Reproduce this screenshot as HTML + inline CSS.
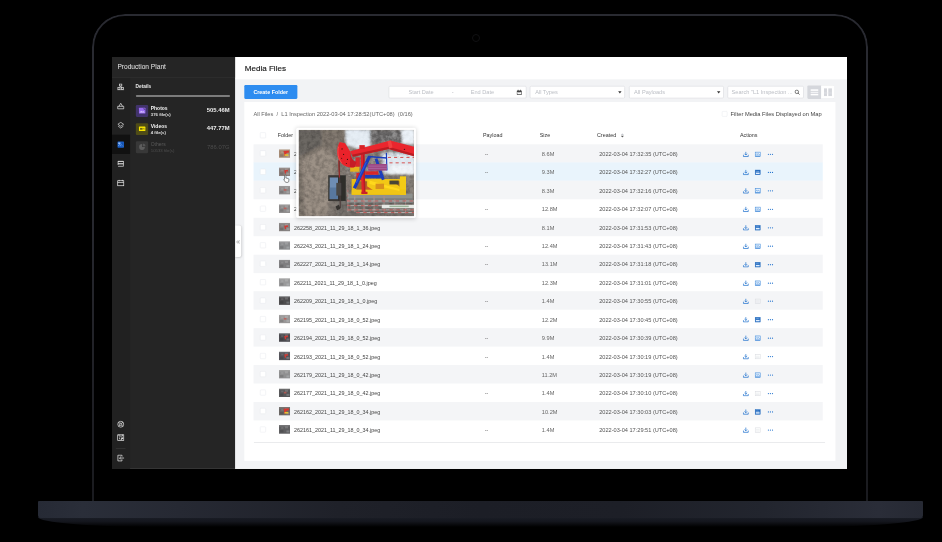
<!DOCTYPE html>
<html><head><meta charset="utf-8">
<style>
*{box-sizing:border-box;margin:0;padding:0}
html,body{width:942px;height:542px;background:#000;overflow:hidden}
body{font-family:"Liberation Sans",sans-serif;position:relative}
/* laptop */
.lid{position:absolute;left:91.6px;top:13.8px;width:776.4px;height:500px;border:2px solid #292a31;border-bottom:none;border-radius:33px 33px 0 0;background:#000;-webkit-mask-image:linear-gradient(180deg,#000 35%,rgba(0,0,0,.62) 100%)}
.cam{position:absolute;left:471.9px;top:34.3px;width:8px;height:8px;border-radius:50%;border:1.6px solid #101012}
.base{position:absolute;left:37.8px;top:500.8px;width:885px;height:17px;border-radius:1px 1px 3px 3px;
 background:linear-gradient(90deg,#262a35 0%,#2a2e39 5%,#262933 16%,#1f2129 34%,#1c1e26 50%,#1d1f27 66%,#22252e 82%,#2a2d38 95%,#262933 100%)}
.base2{position:absolute;left:37.8px;top:517px;width:885px;height:10px;
 background:linear-gradient(180deg,#1b1e27 0%,#14161d 45%,#000 100%);border-radius:0 0 120px 120px / 0 0 10px 10px}
/* app */
.app{position:absolute;left:112px;top:57px;width:1911px;height:1071px;transform:scale(0.3846);transform-origin:0 0;background:#f2f3f5;overflow:hidden;color:#333}
.app *{position:absolute}
.side{left:0;top:0;width:320px;height:1071px;background:#252525}
.nav{left:0;top:53px;width:47px;height:1018px;background:#212121}
.shead{left:0;top:0;width:320px;height:53px;border-bottom:1.5px solid #3b3b3b;background:#252525}
.shead span{left:14px;top:15px;font-size:17.2px;color:#e6e6e6;white-space:nowrap}
.nact{left:0;top:202px;width:47px;height:50px;background:#111}
.nic{left:13px;width:19.5px;height:19.5px}
.main{left:320px;top:0;width:1591px;height:1071px;background:#f2f3f5}
.mhead{left:0;top:0;width:1591px;height:57.5px;background:#fff}
.mhead span{left:25px;top:17px;font-size:21px;color:#151515;white-space:nowrap;-webkit-text-stroke:.35px #151515}
.panel{left:24px;top:117px;width:1537px;height:932.5px;background:#fff}
.row{left:0;width:1911px;height:48px}
.row::before{content:"";position:absolute;left:367.7px;top:0;width:1480px;height:48px}
.row.odd::before{background:#f4f5f7}
.row.hov::before{background:#e9f4fc}
.cb{width:15px;height:15px;border:1.4px solid #e3e5e9;border-radius:2px;background:#fff}
.row .cb{left:384.5px!important;top:16.5px}
.th{left:433.7px;top:13px;width:29.3px;height:22.5px}
.c{top:17.5px;font-size:14px;line-height:16px;color:#555;white-space:nowrap}
.fn{left:473.2px;color:#444}
.pl{left:969px;color:#555}
.sz{left:1117.5px;color:#666;font-size:14.7px}
.dt{left:1266.8px;color:#555;font-size:14.6px}
.ic{top:18px;width:16px;height:16px}
.photo{left:485px;top:188.5px;width:300.5px;height:225.5px}
.hd{top:195px;font-size:14px;line-height:16px;color:#333;white-space:nowrap}
.inp{top:74.5px;height:33.5px;background:#fff;border:2.2px solid #dfe1e5;border-radius:4px}
.ph{top:6.5px;font-size:14.6px;line-height:16px;color:#bbbec4;white-space:nowrap}
</style></head><body>
<div class="lid"></div>
<div class="cam"></div>
<div class="base2"></div>
<div class="base"></div>
<div class="app">
 <div class="main">
  <div class="mhead"><span>Media Files</span></div>
 </div>
 <!-- toolbar -->
 <div style="left:344px;top:72.8px;width:137.5px;height:36.4px;background:#2d8cf0;border-radius:3px"></div>
 <span style="left:344px;top:82.5px;width:137.5px;text-align:center;font-size:14px;line-height:16px;color:#fff;font-weight:bold;white-space:nowrap">Create Folder</span>
 <div class="inp" style="left:718.7px;width:359px">
   <span class="ph" style="left:50px">Start Date</span><span class="ph" style="left:163px">-</span><span class="ph" style="left:212px">End Date</span>
   <svg style="left:330px;top:7px;width:16px;height:16px" viewBox="0 0 16 16"><rect x="1.5" y="3" width="13" height="11.5" rx="1.5" fill="#444"/><rect x="3" y="7" width="10" height="6" fill="#fff"/><rect x="4" y="1" width="2" height="4" fill="#444"/><rect x="10" y="1" width="2" height="4" fill="#444"/><rect x="4.5" y="8.5" width="7" height="1.2" fill="#666"/></svg>
 </div>
 <div class="inp" style="left:1086.3px;width:248px"><span class="ph" style="left:12px">All Types</span>
   <svg style="left:227px;top:11.5px;width:11px;height:8px" viewBox="0 0 12 9"><path d="M1 1.5h10L6 8z" fill="#333"/></svg></div>
 <div class="inp" style="left:1343.5px;width:247px"><span class="ph" style="left:12px">All Payloads</span>
   <svg style="left:226px;top:11.5px;width:11px;height:8px" viewBox="0 0 12 9"><path d="M1 1.5h10L6 8z" fill="#333"/></svg></div>
 <div class="inp" style="left:1600px;width:199px"><span class="ph" style="left:9px">Search "L1 Inspection ...</span>
   <svg style="left:172px;top:7px;width:15px;height:15px" viewBox="0 0 16 16"><circle cx="7" cy="7" r="4.8" fill="none" stroke="#333" stroke-width="1.8"/><path d="M10.5 10.5l4 4" stroke="#333" stroke-width="2"/></svg></div>
 <div style="left:1808.4px;top:73.5px;width:36px;height:35.5px;background:#d5d7dc;border-radius:3px 0 0 3px"></div>
 <svg style="left:1815.5px;top:82.5px;width:21px;height:18px" viewBox="0 0 21 18"><rect x="0" y="1" width="21" height="4" fill="#fff"/><rect x="0" y="7.5" width="21" height="3.5" fill="#f2f3f5"/><rect x="0" y="13" width="21" height="4" fill="#fff"/></svg>
 <div style="left:1844.4px;top:73.5px;width:34px;height:35.5px;background:#fff;border:1.3px solid #dcdee2;border-left:none;border-radius:0 3px 3px 0"></div>
 <svg style="left:1851px;top:81px;width:21px;height:21px" viewBox="0 0 21 21"><rect x="0" y="0" width="8" height="21" fill="#d5d7dc"/><rect x="11.5" y="0" width="9.5" height="21" fill="#d5d7dc"/><rect x="0" y="12" width="21" height="1.2" fill="#e8e9ec"/></svg>
 <!-- panel -->
 <div class="panel" style="left:344px"></div>
 <span style="left:367.7px;top:140px;font-size:14.8px;line-height:16px;color:#666;white-space:nowrap">All Files&nbsp; /&nbsp; L1 Inspection 2022-03-04 17:28:52(UTC+08) &nbsp;(0/16)</span>
 <i class="cb" style="left:1586px;top:140.5px;width:14px;height:14px"></i>
 <span style="left:1608.4px;top:140px;font-size:14.9px;line-height:16px;color:#444;white-space:nowrap">Filter Media Files Displayed on Map</span>
 <!-- table header -->
 <i class="cb" style="left:384.5px;top:195.5px"></i>
 <span class="hd" style="left:431px">Folder</span>
 <span class="hd" style="left:964.6px">Payload</span>
 <span class="hd" style="left:1112px">Size</span>
 <span class="hd" style="left:1261px">Created</span>
 <svg style="left:1322px;top:198px;width:10px;height:12px" viewBox="0 0 10 12"><path d="M5 0.5L9 5H1z" fill="#c5c8ce"/><path d="M5 11.5L9 7H1z" fill="#555"/></svg>
 <span class="hd" style="left:1632.6px">Actions</span>
<div class="row odd" style="top:226.6px"><i class="cb" style="left:17px"></i><svg class="th" viewBox="0 0 30 21" preserveAspectRatio="none"><rect width="30" height="21" fill="#a58a74"/><rect x="0" y="0" width="30" height="4" fill="#fff" opacity=".10"/><rect x="3" y="12" width="9" height="6" fill="#000" opacity=".13"/><rect x="16" y="3" width="8" height="5" fill="#fff" opacity=".16"/><rect x="20" y="13" width="8" height="5" fill="#dfe6ee" opacity=".22"/><rect x="6" y="5" width="6" height="4" fill="#fff" opacity=".12"/><path d="M12 4 L26 3 L27 8 L20 9 L19 16 L14 16 L14 9 Z" fill="#d8362f"/><rect x="15" y="12" width="10" height="4" fill="#e2c236"/></svg><span class="c fn">262290_2021_11_29_18_2_0.jpeg</span><span class="c pl">--</span><span class="c sz">8.6M</span><span class="c dt">2022-03-04 17:32:35 (UTC+08)</span><svg class="ic" style="left:1640px" viewBox="0 0 16 16"><path d="M8 1.5v8.2M4.6 6.6L8 10l3.4-3.4" fill="none" stroke="#2474cf" stroke-width="1.9"/><path d="M1.6 9.2v4.6h12.8V9.2" fill="none" stroke="#2474cf" stroke-width="2"/></svg><svg class="ic" style="left:1671px" viewBox="0 0 16 16"><rect x="1.3" y="2.3" width="13.4" height="11.4" fill="#e4f0fd" stroke="#3a86d8" stroke-width="1.5"/><path d="M2.5 9.5l3.2-3.2 2.6 2.4 2.2-1.8 3 2.6" fill="none" stroke="#3a86d8" stroke-width="1.5"/><path d="M2 12.6h12" stroke="#2474cf" stroke-width="1.6"/></svg><svg class="ic" style="left:1704px" viewBox="0 0 16 16"><circle cx="2.6" cy="8" r="1.6" fill="#2474cf"/><circle cx="8" cy="8" r="1.6" fill="#2474cf"/><circle cx="13.4" cy="8" r="1.6" fill="#2474cf"/></svg></div>
<div class="row hov" style="top:274.4px"><i class="cb" style="left:17px"></i><svg class="th" viewBox="0 0 30 21" preserveAspectRatio="none"><rect width="30" height="21" fill="#8a7f7c"/><rect x="0" y="0" width="30" height="4" fill="#fff" opacity=".10"/><rect x="3" y="12" width="9" height="6" fill="#000" opacity=".13"/><rect x="16" y="3" width="8" height="5" fill="#fff" opacity=".16"/><rect x="20" y="13" width="8" height="5" fill="#dfe6ee" opacity=".22"/><rect x="6" y="5" width="6" height="4" fill="#fff" opacity=".12"/><path d="M14 7 L24 6 L24 10 L19 10 L19 15 L16 15 Z" fill="#d03a34"/></svg><span class="c fn">262275_2021_11_29_18_1_52.jpeg</span><span class="c pl">--</span><span class="c sz">9.3M</span><span class="c dt">2022-03-04 17:32:27 (UTC+08)</span><svg class="ic" style="left:1640px" viewBox="0 0 16 16"><path d="M8 1.5v8.2M4.6 6.6L8 10l3.4-3.4" fill="none" stroke="#2474cf" stroke-width="1.9"/><path d="M1.6 9.2v4.6h12.8V9.2" fill="none" stroke="#2474cf" stroke-width="2"/></svg><svg class="ic" style="left:1671px" viewBox="0 0 16 16"><rect x="1.2" y="1.8" width="13.6" height="12.4" fill="#2a6fc0" stroke="#2a6fc0" stroke-width="1.2"/><rect x="3.2" y="8.6" width="9.6" height="3.6" fill="#dfeeff"/><path d="M3.2 6.5l3-2.4 2.4 1.8 2-1.2 2.2 1.8z" fill="#9cc4f0"/></svg><svg class="ic" style="left:1704px" viewBox="0 0 16 16"><circle cx="2.6" cy="8" r="1.6" fill="#2474cf"/><circle cx="8" cy="8" r="1.6" fill="#2474cf"/><circle cx="13.4" cy="8" r="1.6" fill="#2474cf"/></svg></div>
<div class="row odd" style="top:322.3px"><i class="cb" style="left:17px"></i><svg class="th" viewBox="0 0 30 21" preserveAspectRatio="none"><rect width="30" height="21" fill="#8f8c8c"/><rect x="0" y="0" width="30" height="4" fill="#fff" opacity=".10"/><rect x="3" y="12" width="9" height="6" fill="#000" opacity=".13"/><rect x="16" y="3" width="8" height="5" fill="#fff" opacity=".16"/><rect x="20" y="13" width="8" height="5" fill="#dfe6ee" opacity=".22"/><rect x="6" y="5" width="6" height="4" fill="#fff" opacity=".12"/><rect x="13" y="8" width="7" height="4" fill="#c25a52" opacity=".8"/></svg><span class="c fn">262274_2021_11_29_18_1_52.jpeg</span><span class="c sz">8.3M</span><span class="c dt">2022-03-04 17:32:16 (UTC+08)</span><svg class="ic" style="left:1640px" viewBox="0 0 16 16"><path d="M8 1.5v8.2M4.6 6.6L8 10l3.4-3.4" fill="none" stroke="#2474cf" stroke-width="1.9"/><path d="M1.6 9.2v4.6h12.8V9.2" fill="none" stroke="#2474cf" stroke-width="2"/></svg><svg class="ic" style="left:1671px" viewBox="0 0 16 16"><rect x="1.3" y="2.3" width="13.4" height="11.4" fill="#e4f0fd" stroke="#3a86d8" stroke-width="1.5"/><path d="M2.5 9.5l3.2-3.2 2.6 2.4 2.2-1.8 3 2.6" fill="none" stroke="#3a86d8" stroke-width="1.5"/><path d="M2 12.6h12" stroke="#2474cf" stroke-width="1.6"/></svg><svg class="ic" style="left:1704px" viewBox="0 0 16 16"><circle cx="2.6" cy="8" r="1.6" fill="#2474cf"/><circle cx="8" cy="8" r="1.6" fill="#2474cf"/><circle cx="13.4" cy="8" r="1.6" fill="#2474cf"/></svg></div>
<div class="row" style="top:370.1px"><i class="cb" style="left:17px"></i><svg class="th" viewBox="0 0 30 21" preserveAspectRatio="none"><rect width="30" height="21" fill="#8e8c8c"/><rect x="0" y="0" width="30" height="4" fill="#fff" opacity=".10"/><rect x="3" y="12" width="9" height="6" fill="#000" opacity=".13"/><rect x="16" y="3" width="8" height="5" fill="#fff" opacity=".16"/><rect x="20" y="13" width="8" height="5" fill="#dfe6ee" opacity=".22"/><rect x="6" y="5" width="6" height="4" fill="#fff" opacity=".12"/><rect x="13" y="8" width="7" height="4" fill="#c25a52" opacity=".8"/></svg><span class="c fn">262259_2021_11_29_18_1_36.jpeg</span><span class="c pl">--</span><span class="c sz">12.8M</span><span class="c dt">2022-03-04 17:32:07 (UTC+08)</span><svg class="ic" style="left:1640px" viewBox="0 0 16 16"><path d="M8 1.5v8.2M4.6 6.6L8 10l3.4-3.4" fill="none" stroke="#2474cf" stroke-width="1.9"/><path d="M1.6 9.2v4.6h12.8V9.2" fill="none" stroke="#2474cf" stroke-width="2"/></svg><svg class="ic" style="left:1671px" viewBox="0 0 16 16"><rect x="1.3" y="2.3" width="13.4" height="11.4" fill="#e4f0fd" stroke="#3a86d8" stroke-width="1.5"/><path d="M2.5 9.5l3.2-3.2 2.6 2.4 2.2-1.8 3 2.6" fill="none" stroke="#3a86d8" stroke-width="1.5"/><path d="M2 12.6h12" stroke="#2474cf" stroke-width="1.6"/></svg><svg class="ic" style="left:1704px" viewBox="0 0 16 16"><circle cx="2.6" cy="8" r="1.6" fill="#2474cf"/><circle cx="8" cy="8" r="1.6" fill="#2474cf"/><circle cx="13.4" cy="8" r="1.6" fill="#2474cf"/></svg></div>
<div class="row odd" style="top:418.0px"><i class="cb" style="left:17px"></i><svg class="th" viewBox="0 0 30 21" preserveAspectRatio="none"><rect width="30" height="21" fill="#85807f"/><rect x="0" y="0" width="30" height="4" fill="#fff" opacity=".10"/><rect x="3" y="12" width="9" height="6" fill="#000" opacity=".13"/><rect x="16" y="3" width="8" height="5" fill="#fff" opacity=".16"/><rect x="20" y="13" width="8" height="5" fill="#dfe6ee" opacity=".22"/><rect x="6" y="5" width="6" height="4" fill="#fff" opacity=".12"/><path d="M14 7 L24 6 L24 10 L19 10 L19 15 L16 15 Z" fill="#d03a34"/></svg><span class="c fn">262258_2021_11_29_18_1_36.jpeg</span><span class="c sz">8.1M</span><span class="c dt">2022-03-04 17:31:53 (UTC+08)</span><svg class="ic" style="left:1640px" viewBox="0 0 16 16"><path d="M8 1.5v8.2M4.6 6.6L8 10l3.4-3.4" fill="none" stroke="#2474cf" stroke-width="1.9"/><path d="M1.6 9.2v4.6h12.8V9.2" fill="none" stroke="#2474cf" stroke-width="2"/></svg><svg class="ic" style="left:1671px" viewBox="0 0 16 16"><rect x="1.2" y="1.8" width="13.6" height="12.4" fill="#2a6fc0" stroke="#2a6fc0" stroke-width="1.2"/><rect x="3.2" y="8.6" width="9.6" height="3.6" fill="#dfeeff"/><path d="M3.2 6.5l3-2.4 2.4 1.8 2-1.2 2.2 1.8z" fill="#9cc4f0"/></svg><svg class="ic" style="left:1704px" viewBox="0 0 16 16"><circle cx="2.6" cy="8" r="1.6" fill="#2474cf"/><circle cx="8" cy="8" r="1.6" fill="#2474cf"/><circle cx="13.4" cy="8" r="1.6" fill="#2474cf"/></svg></div>
<div class="row" style="top:465.9px"><i class="cb" style="left:17px"></i><svg class="th" viewBox="0 0 30 21" preserveAspectRatio="none"><rect width="30" height="21" fill="#8b8c8e"/><rect x="0" y="0" width="30" height="4" fill="#fff" opacity=".10"/><rect x="3" y="12" width="9" height="6" fill="#000" opacity=".13"/><rect x="16" y="3" width="8" height="5" fill="#fff" opacity=".16"/><rect x="20" y="13" width="8" height="5" fill="#dfe6ee" opacity=".22"/><rect x="6" y="5" width="6" height="4" fill="#fff" opacity=".12"/></svg><span class="c fn">262243_2021_11_29_18_1_24.jpeg</span><span class="c pl">--</span><span class="c sz">12.4M</span><span class="c dt">2022-03-04 17:31:43 (UTC+08)</span><svg class="ic" style="left:1640px" viewBox="0 0 16 16"><path d="M8 1.5v8.2M4.6 6.6L8 10l3.4-3.4" fill="none" stroke="#2474cf" stroke-width="1.9"/><path d="M1.6 9.2v4.6h12.8V9.2" fill="none" stroke="#2474cf" stroke-width="2"/></svg><svg class="ic" style="left:1671px" viewBox="0 0 16 16"><rect x="1.3" y="2.3" width="13.4" height="11.4" fill="#e4f0fd" stroke="#3a86d8" stroke-width="1.5"/><path d="M2.5 9.5l3.2-3.2 2.6 2.4 2.2-1.8 3 2.6" fill="none" stroke="#3a86d8" stroke-width="1.5"/><path d="M2 12.6h12" stroke="#2474cf" stroke-width="1.6"/></svg><svg class="ic" style="left:1704px" viewBox="0 0 16 16"><circle cx="2.6" cy="8" r="1.6" fill="#2474cf"/><circle cx="8" cy="8" r="1.6" fill="#2474cf"/><circle cx="13.4" cy="8" r="1.6" fill="#2474cf"/></svg></div>
<div class="row odd" style="top:513.7px"><i class="cb" style="left:17px"></i><svg class="th" viewBox="0 0 30 21" preserveAspectRatio="none"><rect width="30" height="21" fill="#7f7e80"/><rect x="0" y="0" width="30" height="4" fill="#fff" opacity=".10"/><rect x="3" y="12" width="9" height="6" fill="#000" opacity=".13"/><rect x="16" y="3" width="8" height="5" fill="#fff" opacity=".16"/><rect x="20" y="13" width="8" height="5" fill="#dfe6ee" opacity=".22"/><rect x="6" y="5" width="6" height="4" fill="#fff" opacity=".12"/></svg><span class="c fn">262227_2021_11_29_18_1_14.jpeg</span><span class="c pl">--</span><span class="c sz">13.1M</span><span class="c dt">2022-03-04 17:31:18 (UTC+08)</span><svg class="ic" style="left:1640px" viewBox="0 0 16 16"><path d="M8 1.5v8.2M4.6 6.6L8 10l3.4-3.4" fill="none" stroke="#2474cf" stroke-width="1.9"/><path d="M1.6 9.2v4.6h12.8V9.2" fill="none" stroke="#2474cf" stroke-width="2"/></svg><svg class="ic" style="left:1671px" viewBox="0 0 16 16"><rect x="1.2" y="1.8" width="13.6" height="12.4" fill="#2a6fc0" stroke="#2a6fc0" stroke-width="1.2"/><rect x="3.2" y="8.6" width="9.6" height="3.6" fill="#dfeeff"/><path d="M3.2 6.5l3-2.4 2.4 1.8 2-1.2 2.2 1.8z" fill="#9cc4f0"/></svg><svg class="ic" style="left:1704px" viewBox="0 0 16 16"><circle cx="2.6" cy="8" r="1.6" fill="#2474cf"/><circle cx="8" cy="8" r="1.6" fill="#2474cf"/><circle cx="13.4" cy="8" r="1.6" fill="#2474cf"/></svg></div>
<div class="row" style="top:561.5px"><i class="cb" style="left:17px"></i><svg class="th" viewBox="0 0 30 21" preserveAspectRatio="none"><rect width="30" height="21" fill="#9a9a9b"/><rect x="0" y="0" width="30" height="4" fill="#fff" opacity=".10"/><rect x="3" y="12" width="9" height="6" fill="#000" opacity=".13"/><rect x="16" y="3" width="8" height="5" fill="#fff" opacity=".16"/><rect x="20" y="13" width="8" height="5" fill="#dfe6ee" opacity=".22"/><rect x="6" y="5" width="6" height="4" fill="#fff" opacity=".12"/></svg><span class="c fn">262211_2021_11_29_18_1_0.jpeg</span><span class="c sz">12.3M</span><span class="c dt">2022-03-04 17:31:01 (UTC+08)</span><svg class="ic" style="left:1640px" viewBox="0 0 16 16"><path d="M8 1.5v8.2M4.6 6.6L8 10l3.4-3.4" fill="none" stroke="#2474cf" stroke-width="1.9"/><path d="M1.6 9.2v4.6h12.8V9.2" fill="none" stroke="#2474cf" stroke-width="2"/></svg><svg class="ic" style="left:1671px" viewBox="0 0 16 16"><rect x="1.3" y="2.3" width="13.4" height="11.4" fill="#e4f0fd" stroke="#3a86d8" stroke-width="1.5"/><path d="M2.5 9.5l3.2-3.2 2.6 2.4 2.2-1.8 3 2.6" fill="none" stroke="#3a86d8" stroke-width="1.5"/><path d="M2 12.6h12" stroke="#2474cf" stroke-width="1.6"/></svg><svg class="ic" style="left:1704px" viewBox="0 0 16 16"><circle cx="2.6" cy="8" r="1.6" fill="#2474cf"/><circle cx="8" cy="8" r="1.6" fill="#2474cf"/><circle cx="13.4" cy="8" r="1.6" fill="#2474cf"/></svg></div>
<div class="row odd" style="top:609.4px"><i class="cb" style="left:17px"></i><svg class="th" viewBox="0 0 30 21" preserveAspectRatio="none"><rect width="30" height="21" fill="#4e4d4f"/><rect x="0" y="0" width="30" height="4" fill="#fff" opacity=".10"/><rect x="3" y="12" width="9" height="6" fill="#000" opacity=".13"/><rect x="16" y="3" width="8" height="5" fill="#fff" opacity=".16"/><rect x="20" y="13" width="8" height="5" fill="#dfe6ee" opacity=".22"/><rect x="6" y="5" width="6" height="4" fill="#fff" opacity=".12"/></svg><span class="c fn">262209_2021_11_29_18_1_0.jpeg</span><span class="c pl">--</span><span class="c sz">1.4M</span><span class="c dt">2022-03-04 17:30:55 (UTC+08)</span><svg class="ic" style="left:1640px" viewBox="0 0 16 16"><path d="M8 1.5v8.2M4.6 6.6L8 10l3.4-3.4" fill="none" stroke="#2474cf" stroke-width="1.9"/><path d="M1.6 9.2v4.6h12.8V9.2" fill="none" stroke="#2474cf" stroke-width="2"/></svg><svg class="ic" style="left:1671px" viewBox="0 0 16 16"><rect x="1.3" y="2.3" width="13.4" height="11.4" fill="none" stroke="#d9dbe0" stroke-width="1.5"/><path d="M3 7h10M3 10.5h10" stroke="#e0e2e6" stroke-width="1.4"/></svg><svg class="ic" style="left:1704px" viewBox="0 0 16 16"><circle cx="2.6" cy="8" r="1.6" fill="#2474cf"/><circle cx="8" cy="8" r="1.6" fill="#2474cf"/><circle cx="13.4" cy="8" r="1.6" fill="#2474cf"/></svg></div>
<div class="row" style="top:657.2px"><i class="cb" style="left:17px"></i><svg class="th" viewBox="0 0 30 21" preserveAspectRatio="none"><rect width="30" height="21" fill="#999797"/><rect x="0" y="0" width="30" height="4" fill="#fff" opacity=".10"/><rect x="3" y="12" width="9" height="6" fill="#000" opacity=".13"/><rect x="16" y="3" width="8" height="5" fill="#fff" opacity=".16"/><rect x="20" y="13" width="8" height="5" fill="#dfe6ee" opacity=".22"/><rect x="6" y="5" width="6" height="4" fill="#fff" opacity=".12"/><rect x="13" y="8" width="7" height="4" fill="#c25a52" opacity=".8"/></svg><span class="c fn">262195_2021_11_29_18_0_52.jpeg</span><span class="c sz">12.2M</span><span class="c dt">2022-03-04 17:30:45 (UTC+08)</span><svg class="ic" style="left:1640px" viewBox="0 0 16 16"><path d="M8 1.5v8.2M4.6 6.6L8 10l3.4-3.4" fill="none" stroke="#2474cf" stroke-width="1.9"/><path d="M1.6 9.2v4.6h12.8V9.2" fill="none" stroke="#2474cf" stroke-width="2"/></svg><svg class="ic" style="left:1671px" viewBox="0 0 16 16"><rect x="1.2" y="1.8" width="13.6" height="12.4" fill="#2a6fc0" stroke="#2a6fc0" stroke-width="1.2"/><rect x="3.2" y="8.6" width="9.6" height="3.6" fill="#dfeeff"/><path d="M3.2 6.5l3-2.4 2.4 1.8 2-1.2 2.2 1.8z" fill="#9cc4f0"/></svg><svg class="ic" style="left:1704px" viewBox="0 0 16 16"><circle cx="2.6" cy="8" r="1.6" fill="#2474cf"/><circle cx="8" cy="8" r="1.6" fill="#2474cf"/><circle cx="13.4" cy="8" r="1.6" fill="#2474cf"/></svg></div>
<div class="row odd" style="top:705.1px"><i class="cb" style="left:17px"></i><svg class="th" viewBox="0 0 30 21" preserveAspectRatio="none"><rect width="30" height="21" fill="#4c4b50"/><rect x="0" y="0" width="30" height="4" fill="#fff" opacity=".10"/><rect x="3" y="12" width="9" height="6" fill="#000" opacity=".13"/><rect x="16" y="3" width="8" height="5" fill="#fff" opacity=".16"/><rect x="20" y="13" width="8" height="5" fill="#dfe6ee" opacity=".22"/><rect x="6" y="5" width="6" height="4" fill="#fff" opacity=".12"/><path d="M14 7 L24 6 L24 10 L19 10 L19 15 L16 15 Z" fill="#d03a34"/></svg><span class="c fn">262194_2021_11_29_18_0_52.jpeg</span><span class="c pl">--</span><span class="c sz">9.9M</span><span class="c dt">2022-03-04 17:30:39 (UTC+08)</span><svg class="ic" style="left:1640px" viewBox="0 0 16 16"><path d="M8 1.5v8.2M4.6 6.6L8 10l3.4-3.4" fill="none" stroke="#2474cf" stroke-width="1.9"/><path d="M1.6 9.2v4.6h12.8V9.2" fill="none" stroke="#2474cf" stroke-width="2"/></svg><svg class="ic" style="left:1671px" viewBox="0 0 16 16"><rect x="1.3" y="2.3" width="13.4" height="11.4" fill="#e4f0fd" stroke="#3a86d8" stroke-width="1.5"/><path d="M2.5 9.5l3.2-3.2 2.6 2.4 2.2-1.8 3 2.6" fill="none" stroke="#3a86d8" stroke-width="1.5"/><path d="M2 12.6h12" stroke="#2474cf" stroke-width="1.6"/></svg><svg class="ic" style="left:1704px" viewBox="0 0 16 16"><circle cx="2.6" cy="8" r="1.6" fill="#2474cf"/><circle cx="8" cy="8" r="1.6" fill="#2474cf"/><circle cx="13.4" cy="8" r="1.6" fill="#2474cf"/></svg></div>
<div class="row" style="top:753.0px"><i class="cb" style="left:17px"></i><svg class="th" viewBox="0 0 30 21" preserveAspectRatio="none"><rect width="30" height="21" fill="#55545a"/><rect x="0" y="0" width="30" height="4" fill="#fff" opacity=".10"/><rect x="3" y="12" width="9" height="6" fill="#000" opacity=".13"/><rect x="16" y="3" width="8" height="5" fill="#fff" opacity=".16"/><rect x="20" y="13" width="8" height="5" fill="#dfe6ee" opacity=".22"/><rect x="6" y="5" width="6" height="4" fill="#fff" opacity=".12"/><path d="M14 7 L24 6 L24 10 L19 10 L19 15 L16 15 Z" fill="#d03a34"/></svg><span class="c fn">262193_2021_11_29_18_0_52.jpeg</span><span class="c pl">--</span><span class="c sz">1.4M</span><span class="c dt">2022-03-04 17:30:19 (UTC+08)</span><svg class="ic" style="left:1640px" viewBox="0 0 16 16"><path d="M8 1.5v8.2M4.6 6.6L8 10l3.4-3.4" fill="none" stroke="#2474cf" stroke-width="1.9"/><path d="M1.6 9.2v4.6h12.8V9.2" fill="none" stroke="#2474cf" stroke-width="2"/></svg><svg class="ic" style="left:1671px" viewBox="0 0 16 16"><rect x="1.3" y="2.3" width="13.4" height="11.4" fill="none" stroke="#d9dbe0" stroke-width="1.5"/><path d="M3 7h10M3 10.5h10" stroke="#e0e2e6" stroke-width="1.4"/></svg><svg class="ic" style="left:1704px" viewBox="0 0 16 16"><circle cx="2.6" cy="8" r="1.6" fill="#2474cf"/><circle cx="8" cy="8" r="1.6" fill="#2474cf"/><circle cx="13.4" cy="8" r="1.6" fill="#2474cf"/></svg></div>
<div class="row odd" style="top:800.8px"><i class="cb" style="left:17px"></i><svg class="th" viewBox="0 0 30 21" preserveAspectRatio="none"><rect width="30" height="21" fill="#8f8f90"/><rect x="0" y="0" width="30" height="4" fill="#fff" opacity=".10"/><rect x="3" y="12" width="9" height="6" fill="#000" opacity=".13"/><rect x="16" y="3" width="8" height="5" fill="#fff" opacity=".16"/><rect x="20" y="13" width="8" height="5" fill="#dfe6ee" opacity=".22"/><rect x="6" y="5" width="6" height="4" fill="#fff" opacity=".12"/></svg><span class="c fn">262179_2021_11_29_18_0_42.jpeg</span><span class="c sz">11.2M</span><span class="c dt">2022-03-04 17:30:19 (UTC+08)</span><svg class="ic" style="left:1640px" viewBox="0 0 16 16"><path d="M8 1.5v8.2M4.6 6.6L8 10l3.4-3.4" fill="none" stroke="#2474cf" stroke-width="1.9"/><path d="M1.6 9.2v4.6h12.8V9.2" fill="none" stroke="#2474cf" stroke-width="2"/></svg><svg class="ic" style="left:1671px" viewBox="0 0 16 16"><rect x="1.3" y="2.3" width="13.4" height="11.4" fill="#e4f0fd" stroke="#3a86d8" stroke-width="1.5"/><path d="M2.5 9.5l3.2-3.2 2.6 2.4 2.2-1.8 3 2.6" fill="none" stroke="#3a86d8" stroke-width="1.5"/><path d="M2 12.6h12" stroke="#2474cf" stroke-width="1.6"/></svg><svg class="ic" style="left:1704px" viewBox="0 0 16 16"><circle cx="2.6" cy="8" r="1.6" fill="#2474cf"/><circle cx="8" cy="8" r="1.6" fill="#2474cf"/><circle cx="13.4" cy="8" r="1.6" fill="#2474cf"/></svg></div>
<div class="row" style="top:848.7px"><i class="cb" style="left:17px"></i><svg class="th" viewBox="0 0 30 21" preserveAspectRatio="none"><rect width="30" height="21" fill="#58585a"/><rect x="0" y="0" width="30" height="4" fill="#fff" opacity=".10"/><rect x="3" y="12" width="9" height="6" fill="#000" opacity=".13"/><rect x="16" y="3" width="8" height="5" fill="#fff" opacity=".16"/><rect x="20" y="13" width="8" height="5" fill="#dfe6ee" opacity=".22"/><rect x="6" y="5" width="6" height="4" fill="#fff" opacity=".12"/><rect x="13" y="8" width="7" height="4" fill="#c25a52" opacity=".8"/></svg><span class="c fn">262177_2021_11_29_18_0_42.jpeg</span><span class="c pl">--</span><span class="c sz">1.4M</span><span class="c dt">2022-03-04 17:30:10 (UTC+08)</span><svg class="ic" style="left:1640px" viewBox="0 0 16 16"><path d="M8 1.5v8.2M4.6 6.6L8 10l3.4-3.4" fill="none" stroke="#2474cf" stroke-width="1.9"/><path d="M1.6 9.2v4.6h12.8V9.2" fill="none" stroke="#2474cf" stroke-width="2"/></svg><svg class="ic" style="left:1671px" viewBox="0 0 16 16"><rect x="1.3" y="2.3" width="13.4" height="11.4" fill="none" stroke="#d9dbe0" stroke-width="1.5"/><path d="M3 7h10M3 10.5h10" stroke="#e0e2e6" stroke-width="1.4"/></svg><svg class="ic" style="left:1704px" viewBox="0 0 16 16"><circle cx="2.6" cy="8" r="1.6" fill="#2474cf"/><circle cx="8" cy="8" r="1.6" fill="#2474cf"/><circle cx="13.4" cy="8" r="1.6" fill="#2474cf"/></svg></div>
<div class="row odd" style="top:896.5px"><i class="cb" style="left:17px"></i><svg class="th" viewBox="0 0 30 21" preserveAspectRatio="none"><rect width="30" height="21" fill="#6a6664"/><rect x="0" y="0" width="30" height="4" fill="#fff" opacity=".10"/><rect x="3" y="12" width="9" height="6" fill="#000" opacity=".13"/><rect x="16" y="3" width="8" height="5" fill="#fff" opacity=".16"/><rect x="20" y="13" width="8" height="5" fill="#dfe6ee" opacity=".22"/><rect x="6" y="5" width="6" height="4" fill="#fff" opacity=".12"/><path d="M12 4 L26 3 L27 8 L20 9 L19 16 L14 16 L14 9 Z" fill="#d8362f"/><rect x="15" y="12" width="10" height="4" fill="#e2c236"/></svg><span class="c fn">262162_2021_11_29_18_0_34.jpeg</span><span class="c sz">10.2M</span><span class="c dt">2022-03-04 17:30:03 (UTC+08)</span><svg class="ic" style="left:1640px" viewBox="0 0 16 16"><path d="M8 1.5v8.2M4.6 6.6L8 10l3.4-3.4" fill="none" stroke="#2474cf" stroke-width="1.9"/><path d="M1.6 9.2v4.6h12.8V9.2" fill="none" stroke="#2474cf" stroke-width="2"/></svg><svg class="ic" style="left:1671px" viewBox="0 0 16 16"><rect x="1.2" y="1.8" width="13.6" height="12.4" fill="#2a6fc0" stroke="#2a6fc0" stroke-width="1.2"/><rect x="3.2" y="8.6" width="9.6" height="3.6" fill="#dfeeff"/><path d="M3.2 6.5l3-2.4 2.4 1.8 2-1.2 2.2 1.8z" fill="#9cc4f0"/></svg><svg class="ic" style="left:1704px" viewBox="0 0 16 16"><circle cx="2.6" cy="8" r="1.6" fill="#2474cf"/><circle cx="8" cy="8" r="1.6" fill="#2474cf"/><circle cx="13.4" cy="8" r="1.6" fill="#2474cf"/></svg></div>
<div class="row" style="top:944.4px"><i class="cb" style="left:17px"></i><svg class="th" viewBox="0 0 30 21" preserveAspectRatio="none"><rect width="30" height="21" fill="#5e5e60"/><rect x="0" y="0" width="30" height="4" fill="#fff" opacity=".10"/><rect x="3" y="12" width="9" height="6" fill="#000" opacity=".13"/><rect x="16" y="3" width="8" height="5" fill="#fff" opacity=".16"/><rect x="20" y="13" width="8" height="5" fill="#dfe6ee" opacity=".22"/><rect x="6" y="5" width="6" height="4" fill="#fff" opacity=".12"/></svg><span class="c fn">262161_2021_11_29_18_0_34.jpeg</span><span class="c pl">--</span><span class="c sz">1.4M</span><span class="c dt">2022-03-04 17:29:51 (UTC+08)</span><svg class="ic" style="left:1640px" viewBox="0 0 16 16"><path d="M8 1.5v8.2M4.6 6.6L8 10l3.4-3.4" fill="none" stroke="#2474cf" stroke-width="1.9"/><path d="M1.6 9.2v4.6h12.8V9.2" fill="none" stroke="#2474cf" stroke-width="2"/></svg><svg class="ic" style="left:1671px" viewBox="0 0 16 16"><rect x="1.3" y="2.3" width="13.4" height="11.4" fill="none" stroke="#d9dbe0" stroke-width="1.5"/><path d="M3 7h10M3 10.5h10" stroke="#e0e2e6" stroke-width="1.4"/></svg><svg class="ic" style="left:1704px" viewBox="0 0 16 16"><circle cx="2.6" cy="8" r="1.6" fill="#2474cf"/><circle cx="8" cy="8" r="1.6" fill="#2474cf"/><circle cx="13.4" cy="8" r="1.6" fill="#2474cf"/></svg></div>
 <div style="left:369px;top:1001px;width:1485px;height:1.6px;background:#e3e5e8"></div>
 <!-- popup -->
 <div style="left:479px;top:183.5px;width:311px;height:234.5px;background:#fff;border-radius:4px;box-shadow:0 2px 12px rgba(0,0,0,.18)"></div>
 <svg class="photo" viewBox="0 0 300 225" preserveAspectRatio="none">
<defs>
<filter id="nz" x="0" y="0" width="100%" height="100%"><feTurbulence type="fractalNoise" baseFrequency="0.09" numOctaves="4" seed="4" result="n"/><feColorMatrix type="matrix" values="0 0 0 0 0  0 0 0 0 0  0 0 0 0 0  1.2 1.2 0 0 -0.95"/><feGaussianBlur stdDeviation="0.6"/></filter>
<filter id="nz2" x="0" y="0" width="100%" height="100%"><feTurbulence type="fractalNoise" baseFrequency="0.07" numOctaves="4" seed="11"/><feColorMatrix type="matrix" values="0 0 0 0 1  0 0 0 0 1  0 0 0 0 1  1.3 1.3 0 0 -1.15"/><feGaussianBlur stdDeviation="0.6"/></filter>
<filter id="bl"><feGaussianBlur stdDeviation="0.7"/></filter>
<filter id="bl3"><feGaussianBlur stdDeviation="2.2"/></filter>
<clipPath id="pc"><rect width="300" height="225"/></clipPath>
</defs>
<g clip-path="url(#pc)">
<rect width="300" height="225" fill="#847c75"/>
<!-- ground tones -->
<g filter="url(#bl3)">
<path d="M0 0h125v60L95 110 60 225H0z" fill="#827970"/>
<path d="M8 80L70 45l32 35-30 145H18z" fill="#9c9186"/>
<path d="M0 0h60v40L0 70z" fill="#6c6763"/>
<path d="M100 170h200v55H100z" fill="#77726d"/>
<path d="M122 0h66v44l-30 6-34-10z" fill="#e4ecf4"/>
<path d="M186 0h82v34h-82z" fill="#6a6868"/>
<path d="M266 0h34v40h-30z" fill="#eaf1f7"/>
<path d="M214 60h86v54h-80z" fill="#dbe5ee"/><path d="M240 96h60v18h-60z" fill="#eef3f8"/>
<path d="M232 34h68v26h-68z" fill="#8a8785"/>
<path d="M280 116h20v56h-20z" fill="#8b847d"/>
</g>
<rect width="300" height="225" filter="url(#nz)" opacity=".27"/>
<rect x="120" y="0" width="180" height="118" filter="url(#nz2)" opacity=".45"/>
<g filter="url(#bl3)" opacity=".8"><path d="M124 2h58v38l-26 8-30-10z" fill="#e6eef6"/><path d="M270 0h30v38h-26z" fill="#edf3f9"/><path d="M222 70h78v44h-70z" fill="#e3ecf4"/><path d="M236 92h64v22h-64z" fill="#f2f6fa"/></g>
<g filter="url(#bl)">
<!-- concrete pad -->
<path d="M128 166h168v24H128z" fill="#8e918e"/>
<path d="M128 178h168v12H128z" fill="#7b7d7b"/>
<!-- pit -->
<path d="M77 118h46v67H77z" fill="#3a3936"/>
<path d="M81 124h22v56H81z" fill="#6e8db3"/>
<path d="M81 150h22v30H81z" fill="#58789f"/>
<path d="M103 120h18v64h-18z" fill="#2e2d2b"/>
<!-- wellhead + rod -->
<path d="M105.500 78l3 125" stroke="#4b3d3a" stroke-width="3" fill="none"/>
<path d="M104.500 80l1.500 44" stroke="#a02a2a" stroke-width="3" fill="none"/>
<path d="M98 138h13v33H98z" fill="#4a4644"/>
<path d="M96 199l9-4 4 10-9 4z" fill="#35312f"/>
<!-- fence -->
<g stroke-width="1.700" fill="none" opacity=".85">
<path d="M126 185h174M126 197h174M128 208h172M150 215h150" stroke="#e9e6e4"/>
<path d="M126 185h174M126 197h174M128 208h172M150 215h150" stroke="#cf2a2a" stroke-dasharray="9 9"/>
<path d="M128 156v58M146 170v44M170 172v42M196 172v44M222 172v44M250 180v38M278 180v38" stroke="#e9e6e4" opacity=".55"/>
<path d="M128 156v58M146 170v44M170 172v42M196 172v44M222 172v44M250 180v38M278 180v38" stroke="#cf2a2a" stroke-dasharray="6 6" opacity=".55"/>
</g>
<path d="M216 194.500h84v9h-84z" fill="#e6e8e4"/>
<path d="M236 197h50v4h-50z" fill="#7fa07c" opacity=".7"/>
<!-- fence on right -->
<g stroke-width="2" fill="none"><path d="M232 72h68M236 86h64" stroke="#e9e6e4"/><path d="M232 72h68M236 86h64" stroke="#cf2a2a" stroke-dasharray="8 8"/></g>
<!-- yellow base -->
<path d="M138 128h141v41H138z" fill="#e8bd13"/>
<path d="M150 134h112v22H150z" fill="#9a6a30"/><path d="M176 138h34v18h-34z" fill="#d9552a" opacity=".8"/>
<path d="M263 121h16v48h-16z" fill="#f3cc12"/>
<path d="M138 156h141v13H138z" fill="#f0c512"/>
<path d="M178 129h60l26 20v8h-70l-16-10z" fill="#f2c714"/>
<path d="M184 132l78 22v5l-78-18z" fill="#ffd81e"/>
<path d="M200 140h22v14h-22z" fill="#d9901a"/>
<path d="M236 132h24v10h-24z" fill="#4a4436"/>
<!-- red lower parts -->
<path d="M150 112h22v20h-22z" fill="#d9232a"/>
<path d="M134 95h24v14h-24z" fill="#e5b21c"/>
<!-- blue frame -->
<g stroke="#1b3cbc" fill="none">
<path d="M201 75l19 55" stroke-width="7.500"/>
<path d="M181 69.500l48 4" stroke-width="4"/>
<path d="M228 60l1.500 46" stroke-width="3"/>
<path d="M168 121h52" stroke-width="8"/>
</g>
<path d="M181 89h48v17h-48z" fill="#7a4ea6"/>
<path d="M181 89h48v17h-48z" fill="#d83a4a" opacity=".38"/>
<path d="M181 94.500h48M181 100.500h48" stroke="#c9b5e6" stroke-width="1" opacity=".7"/>
<path d="M173 108h34v9h-34z" fill="#d9252b"/>
<path d="M148 72h11v24h-11z" fill="#d9252b"/>
<!-- samson post -->
<path d="M160.500 44h10l3 118h-9.500z" fill="#e0242a"/>
<path d="M166.500 44h4l3 118h-4z" fill="#b81b22"/>
<path d="M163 161h16v6h-16z" fill="#c8202a"/>
<path d="M184 70L145 152" stroke="#1b3cbc" stroke-width="8.500" fill="none"/>
<path d="M176 84L150 138" stroke="#2d55da" stroke-width="3" fill="none"/>
<!-- walking beam -->
<path d="M134 56L238 28l62 16v25L234 50 141 70z" fill="#ea272d"/>
<path d="M139 65L234 44l66 19v6L234 50 141 70z" fill="#b81c23"/>
<path d="M231 30l9-2 4 18-9 3z" fill="#f24040"/>
<circle cx="275" cy="51" r="1.800" fill="#3a1010"/>
<path d="M158 40h14v10h-14z" fill="#d82228"/>
<!-- horsehead -->
<path d="M107 32C98 46 97 72 111 87c11 11 27 14 36 9l3-12c-9-2-15-11-15-26L121 35z" fill="#ea242b"/>
<path d="M104 44c-4 14-1 32 8 42" stroke="#f45a55" stroke-width="2" fill="none"/>
<path d="M135 60c1 14 6 22 15 24l-3 12c-4 2-9 2-14 1z" fill="#c51d25"/>
<g fill="#2a0c0c"><circle cx="113" cy="50" r="1.600"/><circle cx="117" cy="64" r="1.600"/><circle cx="127" cy="77" r="1.600"/><circle cx="112" cy="74" r="1.300"/><circle cx="124" cy="88" r="1.300"/></g>
</g>
</g>
</svg>

 <!-- cursor -->
 <svg style="left:445px;top:305px;width:18px;height:23px" viewBox="0 0 20 24"><path d="M6 1.5c1.2 0 2 .8 2 2V10l6.5 1.4c1.6.4 2.4 1.6 2.2 3.2l-.8 5.6c-.2 1.4-1.2 2.3-2.6 2.3H8.4c-1 0-1.800-.4-2.400-1.300L1.700 14.700c-.6-.9.400-2 1.400-1.500L4 13.800V3.500c0-1.200.8-2 2-2z" fill="#fff" stroke="#222" stroke-width="1.5"/></svg>
 <!-- handle -->
 <div style="left:320px;top:437.5px;width:16px;height:82px;background:#fff;border-radius:0 5px 5px 0;box-shadow:1px 1px 5px rgba(0,0,0,.22)"></div>
 <svg style="left:323px;top:476px;width:10px;height:10px" viewBox="0 0 10 10"><path d="M4.600 1L1 5l3.600 4M9 1L5.400 5 9 9" fill="none" stroke="#555" stroke-width="1.3"/></svg>
 <!-- sidebar -->
 <div class="side">
  <div class="nav"></div>
  <div class="shead"><span>Production Plant</span></div>
  <div class="nact"></div>
  <!-- nav icons -->
  <svg class="nic" style="top:67.5px" viewBox="0 0 21 21"><g fill="none" stroke="#eee" stroke-width="1.8"><rect x="7.5" y="2.5" width="6" height="5.500"/><rect x="2.500" y="12" width="6" height="5"/><rect x="12.5" y="12" width="6" height="5"/><path d="M10.5 8v4M1 18.600h19"/></g></svg>
  <svg class="nic" style="top:118px" viewBox="0 0 21 21"><g fill="none" stroke="#eee" stroke-width="1.9" stroke-linejoin="round"><path d="M2 11v7h17v-7"/><path d="M10.5 2.500L5.500 11h10z"/><path d="M2 11h4M15 11h4"/></g></svg>
  <svg class="nic" style="top:168px" viewBox="0 0 21 21"><g fill="none" stroke="#eee" stroke-width="1.8" stroke-linejoin="round"><path d="M10.5 2L18.500 7.500 10.5 13 2.500 7.500z"/><path d="M3 12.500l7.500 5.500 7.500-5.500"/></g></svg>
  <svg class="nic" style="top:217.5px" viewBox="0 0 21 21"><rect x="1.500" y="2" width="18" height="17" rx="1.500" fill="#1b60c8"/><path d="M3.500 14.500l4-4.500 3 3 2.500-2.500 4.500 4.500" fill="none" stroke="#9cc6ff" stroke-width="1.600"/><rect x="3.500" y="5" width="6" height="3" fill="#cfe3ff"/><rect x="13" y="5" width="4" height="10" fill="#0a3f8f" opacity=".5"/></svg>
  <svg class="nic" style="top:268px" viewBox="0 0 21 21"><g fill="none" stroke="#eee" stroke-width="1.8"><path d="M3 3.500h15M3 10.500h15M3 17.500h15"/><rect x="3" y="3.500" width="15" height="7"/><path d="M18 10.500v7M3 10.500v3"/></g></svg>
  <svg class="nic" style="top:318px" viewBox="0 0 21 21"><g fill="none" stroke="#eee" stroke-width="1.9"><rect x="2" y="4" width="17" height="14"/><path d="M2 9h17M6 1.500v4M15 1.500v4"/></g></svg>
  <!-- bottom icons -->
  <svg class="nic" style="top:945px" viewBox="0 0 21 21"><g fill="none" stroke="#eee" stroke-width="1.9"><circle cx="10.5" cy="10.5" r="8.300"/><circle cx="10.5" cy="10.5" r="3.200"/><path d="M4.600 4.600l3.600 3.600M16.400 4.600l-3.600 3.600M4.600 16.400l3.600-3.600M16.400 16.400l-3.600-3.600"/></g></svg>
  <svg class="nic" style="top:980px" viewBox="0 0 21 21"><g fill="none" stroke="#eee" stroke-width="1.9"><rect x="2" y="2.500" width="17" height="16"/><path d="M5.500 2v4h10V2" /><path d="M7 10v5M10.500 11.500h3.500l-3 4h3.500"/></g><rect x="13.500" y="10" width="4" height="4" fill="#eee"/></svg>
  <div style="left:10px;top:1017.5px;width:25px;height:1.5px;background:#4a4a4a"></div>
  <svg class="nic" style="top:1033px" viewBox="0 0 21 21"><g fill="none" stroke="#eee" stroke-width="2"><path d="M14 6.500V2.500H2.500v16H14v-4"/><path d="M20 10.500H7.500M11 6.500l-4 4 4 4"/></g></svg>
  <!-- details -->
  <span style="left:61.4px;top:67.5px;font-size:12.4px;line-height:16px;font-weight:bold;color:#e8e8e8;white-space:nowrap">Details</span>
  <div style="left:61.5px;top:99px;width:245.5px;height:5px;border-radius:2.5px;background:#7c7c7c"></div>
  <div style="left:62.4px;top:124.5px;width:31.5px;height:31px;border-radius:3px;background:#41336a"></div>
  <svg style="left:68.500px;top:130px;width:19px;height:19px" viewBox="0 0 19 19"><rect x="1" y="2" width="17" height="15" rx="1.500" fill="#9a6df0"/><path d="M2.500 14.500l4.500-5 3 3 2-2 4.500 4z" fill="#d9c6ff"/><path d="M12 4.500h3.500V8" fill="none" stroke="#3f2f73" stroke-width="1.600"/></svg>
  <span style="left:100.8px;top:125px;font-size:12.9px;line-height:16px;font-weight:bold;color:#f2f2f2;white-space:nowrap">Photos</span>
  <span style="left:100.8px;top:141.5px;font-size:11.2px;line-height:15px;font-weight:bold;color:#e0e0e0;white-space:nowrap">376 file(s)</span>
  <span style="right:14.5px;top:130px;font-size:15.200px;line-height:17px;color:#ededed;white-space:nowrap;font-weight:bold">505.46M</span>
  <div style="left:62.4px;top:171.5px;width:31.5px;height:31px;border-radius:3px;background:#4f4c17"></div>
  <svg style="left:68.500px;top:177px;width:19px;height:19px" viewBox="0 0 19 19"><rect x="1" y="4" width="17" height="11.500" rx="1.500" fill="#f7e400"/><rect x="4" y="7.500" width="6.500" height="4.500" fill="#6a6410"/><path d="M11.500 9.750l3.500-2.200v4.400z" fill="#6a6410"/></svg>
  <span style="left:100.8px;top:172px;font-size:12.9px;line-height:16px;font-weight:bold;color:#f2f2f2;white-space:nowrap">Videos</span>
  <span style="left:100.8px;top:188.5px;font-size:11.2px;line-height:15px;font-weight:bold;color:#e0e0e0;white-space:nowrap">4 file(s)</span>
  <span style="right:14.5px;top:177px;font-size:15.200px;line-height:17px;color:#ededed;white-space:nowrap;font-weight:bold">447.77M</span>
  <div style="left:62.4px;top:218.5px;width:31.5px;height:31px;border-radius:3px;background:#383838"></div>
  <svg style="left:68.500px;top:224px;width:19px;height:19px" viewBox="0 0 19 19"><path d="M9 2.500a7.500 7.500 0 1 0 7.500 7.500H9z" fill="#5d5d5d"/><path d="M11 1v7h7a7 7 0 0 0-7-7z" fill="#555"/></svg>
  <span style="left:100.8px;top:219px;font-size:12.9px;line-height:16px;color:#5a5a5a;white-space:nowrap">Others</span>
  <span style="left:100.8px;top:235.5px;font-size:11.2px;line-height:15px;color:#4f4f4f;white-space:nowrap">10533 file(s)</span>
  <span style="right:14.5px;top:224px;font-size:15.200px;line-height:17px;color:#4c4c4c;white-space:nowrap">786.07G</span>
 </div>
</div>
</body></html>
